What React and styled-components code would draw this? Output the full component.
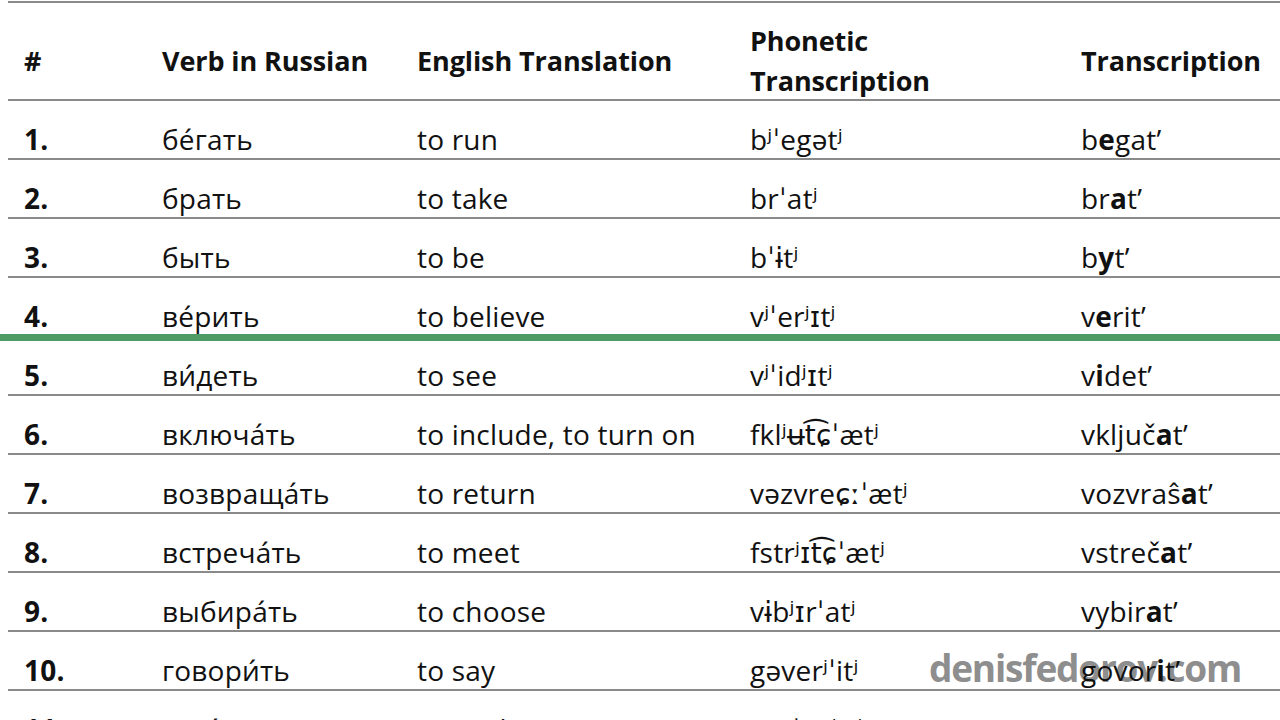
import React from 'react'
import styled, { createGlobalStyle } from 'styled-components'

const GlobalStyle = createGlobalStyle`
  body {
    margin: 0;
    background: #fff;
  }
`

const verbs = [
  { n: '1.', ru: 'бе́гать', en: 'to run', ph: 'bʲˈegətʲ', tr: ['b', 'e', 'gat’'] },
  { n: '2.', ru: 'брать', en: 'to take', ph: 'brˈatʲ', tr: ['br', 'a', 't’'] },
  { n: '3.', ru: 'быть', en: 'to be', ph: 'bˈɨtʲ', tr: ['b', 'y', 't’'] },
  { n: '4.', ru: 'ве́рить', en: 'to believe', ph: 'vʲˈerʲɪtʲ', tr: ['v', 'e', 'rit’'] },
  { n: '5.', ru: 'ви́деть', en: 'to see', ph: 'vʲˈidʲɪtʲ', tr: ['v', 'i', 'det’'] },
  { n: '6.', ru: 'включа́ть', en: 'to include, to turn on', ph: 'fklʲʉt͡ɕˈætʲ', tr: ['vključ', 'a', 't’'] },
  { n: '7.', ru: 'возвраща́ть', en: 'to return', ph: 'vəzvreɕːˈætʲ', tr: ['vozvraŝ', 'a', 't’'] },
  { n: '8.', ru: 'встреча́ть', en: 'to meet', ph: 'fstrʲɪt͡ɕˈætʲ', tr: ['vstreč', 'a', 't’'] },
  { n: '9.', ru: 'выбира́ть', en: 'to choose', ph: 'vɨbʲɪrˈatʲ', tr: ['vybir', 'a', 't’'] },
  { n: '10.', ru: 'говори́ть', en: 'to say', ph: 'gəverʲˈitʲ', tr: ['govor', 'i', 't’'] },
  { n: '11.', ru: 'гото́вить', en: 'to cook', ph: 'gɐtˈovʲɪtʲ', tr: ['got', 'o', 'vit’'] },
]

const Page = styled.div`
  position: relative;
  width: 1280px;
  height: 720px;
  overflow: hidden;
  background: #fff;
  padding-top: 1px;
  box-sizing: border-box;
  font-family: "Open Sans", "DejaVu Sans", sans-serif;
  color: #111;
`

const Table = styled.div`
  position: relative;
  z-index: 1;
  margin-left: 8px;
  border-top: 2px solid #8a8a8a;
`

const Row = styled.div`
  display: grid;
  grid-template-columns: 154px 255px 333px 331px 1fr;
  box-sizing: border-box;
  height: ${p => (p.$head ? '98px' : '59px')};
  padding-top: ${p => (p.$head ? '18px' : '0')};
  align-items: ${p => (p.$head ? 'center' : 'end')};
  border-bottom: 2px solid #8a8a8a;
`

const Cell = styled.div`
  padding-left: ${p => (p.$first ? '16px' : '0')};
  font-size: ${p => (p.$head ? '27px' : '28px')};
  line-height: ${p => (p.$head ? '40px' : '37px')};
  font-weight: ${p => (p.$bold ? 700 : 400)};
  letter-spacing: ${p => (p.$head ? '-0.1px' : '0.2px')};
  white-space: nowrap;
`

const Stress = styled.b`
  font-weight: 700;
`

const Marker = styled.div`
  position: absolute;
  z-index: 2;
  left: 0;
  right: 0;
  top: 334px;
  height: 7px;
  background: #4f9b65;
`

const Watermark = styled.div`
  position: absolute;
  z-index: 0;
  left: 929px;
  top: 642px;
  font-size: 37px;
  font-weight: 700;
  letter-spacing: -1.2px;
  color: #8e8e8e;
`

export default function App() {
  return (
    <Page>
      <GlobalStyle />
      <Watermark>denisfedorov.com</Watermark>
      <Table>
        <Row $head>
          <Cell $head $first $bold>#</Cell>
          <Cell $head $bold>Verb in Russian</Cell>
          <Cell $head $bold>English Translation</Cell>
          <Cell $head $bold>Phonetic<br />Transcription</Cell>
          <Cell $head $bold>Transcription</Cell>
        </Row>
        {verbs.map(v => (
          <Row key={v.n}>
            <Cell $first $bold>{v.n}</Cell>
            <Cell>{v.ru}</Cell>
            <Cell>{v.en}</Cell>
            <Cell>{v.ph}</Cell>
            <Cell>
              {v.tr[0]}
              <Stress>{v.tr[1]}</Stress>
              {v.tr[2]}
            </Cell>
          </Row>
        ))}
      </Table>
      <Marker />
    </Page>
  )
}
